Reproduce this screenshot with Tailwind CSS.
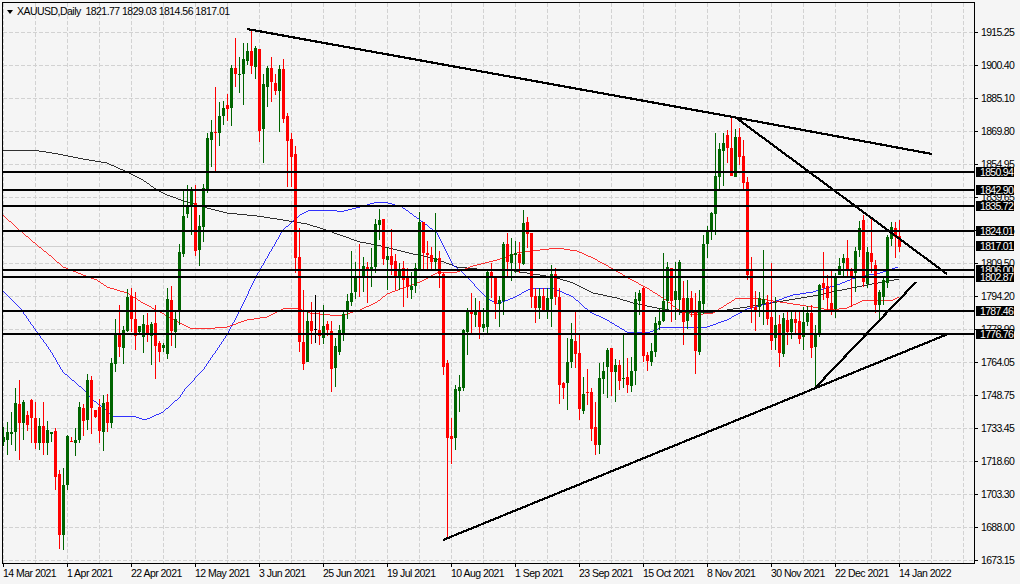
<!DOCTYPE html>
<html lang="en">
<head>
    <meta charset="UTF-8">
    <title>XAUUSD,Daily</title>
    <script src="https://cdn.jsdelivr.net/npm/@tailwindcss/browser@4"></script>
</head>
<body class="bg-[#f5f5f5]">
<div class="relative w-[1020px] h-[584px] overflow-hidden bg-[#f5f5f5] pt-[2px] pl-[2px] font-['Liberation_Sans',sans-serif] text-[10.5px] tracking-[-0.53px] text-black">
    <div class="flex h-[562px]">
        <!-- Chart -->
        <div class="relative w-[973px] h-[562px] border border-black">
            <svg id="chart" class="block" width="971" height="560" viewBox="3 3 971 560" shape-rendering="crispEdges"></svg>
            <div class="absolute left-[4px] top-[7px] w-0 h-0 border-x-[3px] border-t-[4px] border-x-transparent border-t-black"></div>
            <div class="absolute left-[14px] top-[1px] leading-[14px] whitespace-pre">XAUUSD,Daily  1821.77 1829.03 1814.56 1817.01</div>
        </div>
        <!-- Price scale -->
        <div class="flex flex-col pt-[14px] tracking-[-0.7px]">
            <div class="flex items-center shrink-0 h-[33px]"><span class="w-[3px] h-px bg-black"></span><span class="ml-[3px]">1915.25</span></div>
            <div class="flex items-center shrink-0 h-[33px]"><span class="w-[3px] h-px bg-black"></span><span class="ml-[3px]">1900.40</span></div>
            <div class="flex items-center shrink-0 h-[33px]"><span class="w-[3px] h-px bg-black"></span><span class="ml-[3px]">1885.10</span></div>
            <div class="flex items-center shrink-0 h-[33px]"><span class="w-[3px] h-px bg-black"></span><span class="ml-[3px]">1869.80</span></div>
            <div class="flex items-center shrink-0 h-[33px]"><span class="w-[3px] h-px bg-black"></span><span class="ml-[3px]">1854.95</span></div>
            <div class="flex items-center shrink-0 h-[33px]"><span class="w-[3px] h-px bg-black"></span><span class="ml-[3px]">1839.65</span></div>
            <div class="flex items-center shrink-0 h-[33px]"><span class="w-[3px] h-px bg-black"></span><span class="ml-[3px]">1824.35</span></div>
            <div class="flex items-center shrink-0 h-[33px]"><span class="w-[3px] h-px bg-black"></span><span class="ml-[3px]">1809.50</span></div>
            <div class="flex items-center shrink-0 h-[33px]"><span class="w-[3px] h-px bg-black"></span><span class="ml-[3px]">1794.20</span></div>
            <div class="flex items-center shrink-0 h-[33px]"><span class="w-[3px] h-px bg-black"></span><span class="ml-[3px]">1778.90</span></div>
            <div class="flex items-center shrink-0 h-[33px]"><span class="w-[3px] h-px bg-black"></span><span class="ml-[3px]">1764.05</span></div>
            <div class="flex items-center shrink-0 h-[33px]"><span class="w-[3px] h-px bg-black"></span><span class="ml-[3px]">1748.75</span></div>
            <div class="flex items-center shrink-0 h-[33px]"><span class="w-[3px] h-px bg-black"></span><span class="ml-[3px]">1733.45</span></div>
            <div class="flex items-center shrink-0 h-[33px]"><span class="w-[3px] h-px bg-black"></span><span class="ml-[3px]">1718.60</span></div>
            <div class="flex items-center shrink-0 h-[33px]"><span class="w-[3px] h-px bg-black"></span><span class="ml-[3px]">1703.30</span></div>
            <div class="flex items-center shrink-0 h-[33px]"><span class="w-[3px] h-px bg-black"></span><span class="ml-[3px]">1688.00</span></div>
            <div class="flex items-center shrink-0 h-[33px]"><span class="w-[3px] h-px bg-black"></span><span class="ml-[3px]">1673.15</span></div>
        </div>
    </div>
    <!-- Time scale -->
    <div class="flex ml-px leading-[12px] whitespace-nowrap">
        <div class="w-[64px]"><div class="w-px h-[3px] bg-black"></div>14 Mar 2021</div>
        <div class="w-[64px]"><div class="w-px h-[3px] bg-black"></div>1 Apr 2021</div>
        <div class="w-[64px]"><div class="w-px h-[3px] bg-black"></div>22 Apr 2021</div>
        <div class="w-[64px]"><div class="w-px h-[3px] bg-black"></div>12 May 2021</div>
        <div class="w-[64px]"><div class="w-px h-[3px] bg-black"></div>3 Jun 2021</div>
        <div class="w-[64px]"><div class="w-px h-[3px] bg-black"></div>25 Jun 2021</div>
        <div class="w-[64px]"><div class="w-px h-[3px] bg-black"></div>19 Jul 2021</div>
        <div class="w-[64px]"><div class="w-px h-[3px] bg-black"></div>10 Aug 2021</div>
        <div class="w-[64px]"><div class="w-px h-[3px] bg-black"></div>1 Sep 2021</div>
        <div class="w-[64px]"><div class="w-px h-[3px] bg-black"></div>23 Sep 2021</div>
        <div class="w-[64px]"><div class="w-px h-[3px] bg-black"></div>15 Oct 2021</div>
        <div class="w-[64px]"><div class="w-px h-[3px] bg-black"></div>8 Nov 2021</div>
        <div class="w-[64px]"><div class="w-px h-[3px] bg-black"></div>30 Nov 2021</div>
        <div class="w-[64px]"><div class="w-px h-[3px] bg-black"></div>22 Dec 2021</div>
        <div class="w-[64px]"><div class="w-px h-[3px] bg-black"></div>14 Jan 2022</div>
    </div>
    <!-- Price tags -->
    <div class="absolute left-[976px] top-[167px] w-[38px] h-[10px] bg-black text-white tracking-[-0.7px] leading-[10px] pl-[4px]">1850.94</div>
    <div class="absolute left-[976px] top-[185px] w-[38px] h-[10px] bg-black text-white tracking-[-0.7px] leading-[10px] pl-[4px]">1842.90</div>
    <div class="absolute left-[976px] top-[201px] w-[38px] h-[10px] bg-black text-white tracking-[-0.7px] leading-[10px] pl-[4px]">1835.72</div>
    <div class="absolute left-[976px] top-[226px] w-[38px] h-[10px] bg-black text-white tracking-[-0.7px] leading-[10px] pl-[4px]">1824.01</div>
    <div class="absolute left-[976px] top-[241px] w-[38px] h-[10px] bg-black text-white tracking-[-0.7px] leading-[10px] pl-[4px]">1817.01</div>
    <div class="absolute left-[976px] top-[265px] w-[38px] h-[10px] bg-black text-white tracking-[-0.7px] leading-[10px] pl-[4px]">1806.00</div>
    <div class="absolute left-[976px] top-[272px] w-[38px] h-[10px] bg-black text-white tracking-[-0.7px] leading-[10px] pl-[4px]">1802.87</div>
    <div class="absolute left-[976px] top-[306px] w-[38px] h-[10px] bg-black text-white tracking-[-0.7px] leading-[10px] pl-[4px]">1787.46</div>
    <div class="absolute left-[976px] top-[329px] w-[38px] h-[10px] bg-black text-white tracking-[-0.7px] leading-[10px] pl-[4px]">1776.76</div>
</div>
<script>
    // [wick top, wick bottom, body top, body bottom, colour] in page pixels, one bar every 4px
    var g = '#006400', r = '#ff0000', k = '#000000';
    var bars = [
        [427,446,437,442,g],[422,455,432,440,g],[412,445,432,434,g],[388,451,403,432,g],[380,460,404,423,r],
        [400,440,402,423,g],[411,431,415,425,r],[399,443,400,418,r],[402,449,418,443,r],[418,450,426,443,g],
        [402,455,426,443,r],[421,455,430,443,g],[432,442,432,434,g],[428,490,431,477,r],[470,549,474,535,r],
        [468,550,485,535,g],[435,490,436,485,g],[437,442,441,442,r],[428,456,440,443,g],[402,443,407,440,g],
        [404,436,408,421,r],[374,430,380,420,g],[376,434,380,408,r],[410,418,410,417,r],[399,443,407,431,r],
        [395,451,403,432,g],[394,432,402,423,r],[358,428,363,423,g],[319,372,333,364,g],[305,357,333,347,r],
        [326,364,330,348,g],[289,332,297,331,g],[288,332,296,319,r],[292,350,319,336,r],[326,335,326,332,g],
        [315,353,324,337,g],[313,342,325,335,r],[322,365,324,336,g],[305,379,323,346,r],[341,362,343,352,r],
        [343,352,345,348,g],[288,359,299,354,g],[286,346,300,331,r],[310,348,319,332,g],[244,325,252,312,g],
        [189,257,216,254,g],[185,218,206,214,g],[187,235,190,206,g],[185,256,203,251,r],[215,266,226,250,g],
        [184,242,188,227,g],[133,193,138,191,g],[120,167,132,140,g],[87,172,132,133,r],[102,146,116,133,g],
        [101,125,108,116,g],[94,121,105,109,r],[65,126,68,108,g],[38,87,68,74,r],[57,93,74,75,g],
        [43,105,59,74,g],[43,65,51,61,g],[29,74,51,66,r],[46,79,48,67,g],[49,142,49,131,r],
        [74,163,84,129,g],[66,107,68,87,g],[57,102,68,82,r],[74,95,83,91,r],[65,132,69,91,g],
        [59,123,69,119,r],[113,187,116,141,r],[133,187,139,157,r],[146,273,154,258,r],[228,352,257,342,r],
        [290,370,342,364,r],[312,362,321,362,g],[302,344,321,331,r],[295,343,329,330,k],[310,345,330,336,r],
        [305,344,326,338,g],[321,336,324,330,r],[321,392,331,369,r],[338,387,346,368,g],[325,355,330,352,g],
        [310,341,314,334,g],[294,319,301,311,g],[251,306,293,302,g],[262,299,277,292,g],[244,297,276,277,r],
        [257,292,266,277,g],[262,303,267,271,r],[248,287,267,270,g],[219,273,224,267,g],[209,240,220,225,g],
        [219,265,219,259,r],[247,290,256,260,g],[229,275,256,265,r],[254,290,261,277,r],[263,290,269,277,g],
        [261,307,268,280,r],[268,298,277,287,r],[272,299,286,290,g],[263,293,268,286,g],[212,271,222,269,g],
        [222,270,222,253,r],[241,271,253,255,r],[247,271,255,262,r],[213,270,258,262,g],[251,288,258,274,r],
        [273,375,274,367,r],[360,539,363,438,r],[418,464,436,439,r],[385,450,389,438,g],[375,412,387,391,g],
        [329,391,330,388,g],[308,355,311,332,g],[293,333,311,314,r],[298,327,311,315,g],[301,339,310,327,r],
        [308,332,324,328,g],[270,335,272,327,g],[263,298,272,278,r],[277,319,277,304,r],[296,327,300,304,g],
        [242,315,244,301,g],[233,277,244,262,r],[238,281,254,263,g],[241,273,253,255,g],[242,273,254,263,r],
        [210,265,223,264,g],[217,248,222,234,r],[233,308,233,297,r],[288,323,296,308,r],[288,319,296,308,g],
        [288,312,296,311,r],[288,319,298,311,g],[265,327,274,299,g],[268,305,274,297,r],[288,404,297,385,r],
        [382,399,383,388,r],[338,410,362,383,g],[323,368,339,362,g],[311,368,341,354,r],[335,420,353,409,r],
        [377,414,394,411,g],[369,405,392,393,r],[388,441,392,429,r],[402,455,427,445,r],[363,454,378,445,g],
        [362,394,371,379,g],[348,398,350,367,g],[348,396,348,372,r],[359,402,365,372,g],[360,390,365,381,r],
        [333,388,378,379,g],[358,393,377,385,r],[357,392,371,386,g],[292,385,299,371,g],[290,315,293,301,g],
        [287,362,288,356,r],[352,371,355,361,r],[343,366,351,362,g],[317,357,323,352,g],[308,330,321,325,g],
        [253,322,301,321,g],[262,311,267,301,g],[268,322,268,301,r],[262,320,291,300,g],[260,315,262,300,g],
        [281,345,298,322,r],[280,329,298,321,g],[291,317,298,312,r],[293,374,310,351,r],[290,355,301,352,g],
        [235,314,244,304,g],[226,258,231,244,g],[212,240,213,231,g],[133,235,176,214,g],[143,190,149,177,g],
        [133,186,143,151,g],[130,163,135,148,r],[117,176,148,176,r],[129,177,137,177,g],[128,165,137,157,r],
        [140,191,156,183,r],[177,280,182,275,r],[257,323,269,308,r],[291,331,307,310,r],[292,317,298,307,g],
        [250,325,299,304,g],[295,325,302,319,r],[263,350,317,341,r],[297,350,325,338,g],[315,367,324,353,r],
        [313,357,318,354,g],[310,345,320,332,r],[311,339,319,332,g],[312,333,319,323,r],[312,344,321,339,r],
        [307,350,322,337,g],[306,326,313,322,g],[305,358,313,348,r],[325,387,334,347,g],[284,337,285,335,g],
        [252,300,283,288,r],[275,310,286,298,r],[270,315,303,311,r],[273,318,277,309,g],[258,275,266,275,g],
        [254,278,258,263,g],[240,277,258,271,r],[268,307,270,277,r],[247,292,251,273,g],[221,257,228,250,g],
        [215,287,220,282,r],[247,288,252,284,g],[218,273,253,262,r],[260,313,265,305,r],[290,320,292,305,g],
        [278,305,280,297,g],[235,288,237,283,g],[222,246,227,239,g],[222,258,228,237,r],[220,252,236,247,r]
    ];
    var black = '3,150 33,150 58,154 83,159 107,163 127,172 143,180 157,190 167,195 187,202 207,208 227,213 257,216 283,220 307,224 323,229 340,235 360,242 377,245 397,250 413,254 433,258 457,267 487,270 507,270 520,272 540,275 557,278 573,283 593,293 617,298 633,303 657,308 680,312 713,312 747,307 777,302 813,296 837,291 867,285 899,279';
    var blue = '3,291 20,308 37,332 50,350 63,372 83,389 93,400 113,416 133,416 145,420 163,412 180,397 185,389 203,370 227,335 240,310 257,275 283,230 300,215 310,210 333,210 340,212 360,207 377,202 388,203 402,207 420,220 437,233 453,265 463,273 487,298 497,304 513,298 530,289 553,288 573,297 590,312 607,320 627,332 648,333 660,328 680,327 707,327 727,320 747,309 770,303 793,295 813,292 837,285 857,277 880,273 898,267';
    var red = '3,215 17,228 37,245 53,258 63,267 83,275 97,280 107,287 127,293 143,303 160,312 180,323 190,328 203,329 227,327 247,320 267,317 283,309 297,308 310,313 340,316 360,310 377,302 387,294 403,288 420,282 437,273 457,272 473,266 497,260 517,253 540,250 557,248 577,251 593,258 613,269 630,279 647,288 663,298 680,311 693,315 713,313 737,298 760,299 780,302 813,307 830,310 847,308 862,301 893,300 899,297';

    var out = '';
    // dashed grid
    for (var x = 3; x < 974; x += 32) out += '<line x1="' + (x + .5) + '" x2="' + (x + .5) + '" y1="3" y2="563" stroke="#d2d2d2" stroke-dasharray="4 2"/>';
    for (var y = 32; y < 563; y += 33) out += '<line x1="3" x2="974" y1="' + (y + .5) + '" y2="' + (y + .5) + '" stroke="#d2d2d2" stroke-dasharray="4 2"/>';
    // bid line
    out += '<rect x="3" y="246" width="971" height="1" fill="#d0d0d0"/>';
    // moving averages
    [[black, '#000000'], [blue, '#0000ff'], [red, '#ff0000']].forEach(function (m) {
        out += '<polyline points="' + m[0] + '" fill="none" stroke="' + m[1] + '" stroke-width="0.8"/>';
    });
    // candles
    bars.forEach(function (b, i) {
        var cx = 3 + i * 4;
        out += '<rect x="' + cx + '" y="' + b[0] + '" width="1" height="' + (b[1] - b[0]) + '" fill="' + b[4] + '"/>';
        out += '<rect x="' + (cx - 1) + '" y="' + b[2] + '" width="3" height="' + (b[3] - b[2]) + '" fill="' + b[4] + '"/>';
    });
    // horizontal levels
    [172, 190, 206, 231, 270, 277, 311, 334].forEach(function (y) {
        out += '<rect x="3" y="' + (y - 1) + '" width="971" height="2" fill="#000000"/>';
    });
    // trend lines
    ['247,29 733,117 932,154', '735,117 947,274', '443,540 948,334', '815,388 916,282'].forEach(function (p) {
        out += '<polyline points="' + p + '" fill="none" stroke="#000000" stroke-width="2.2"/>';
    });
    document.getElementById('chart').innerHTML = out;
</script>
</body>
</html>
